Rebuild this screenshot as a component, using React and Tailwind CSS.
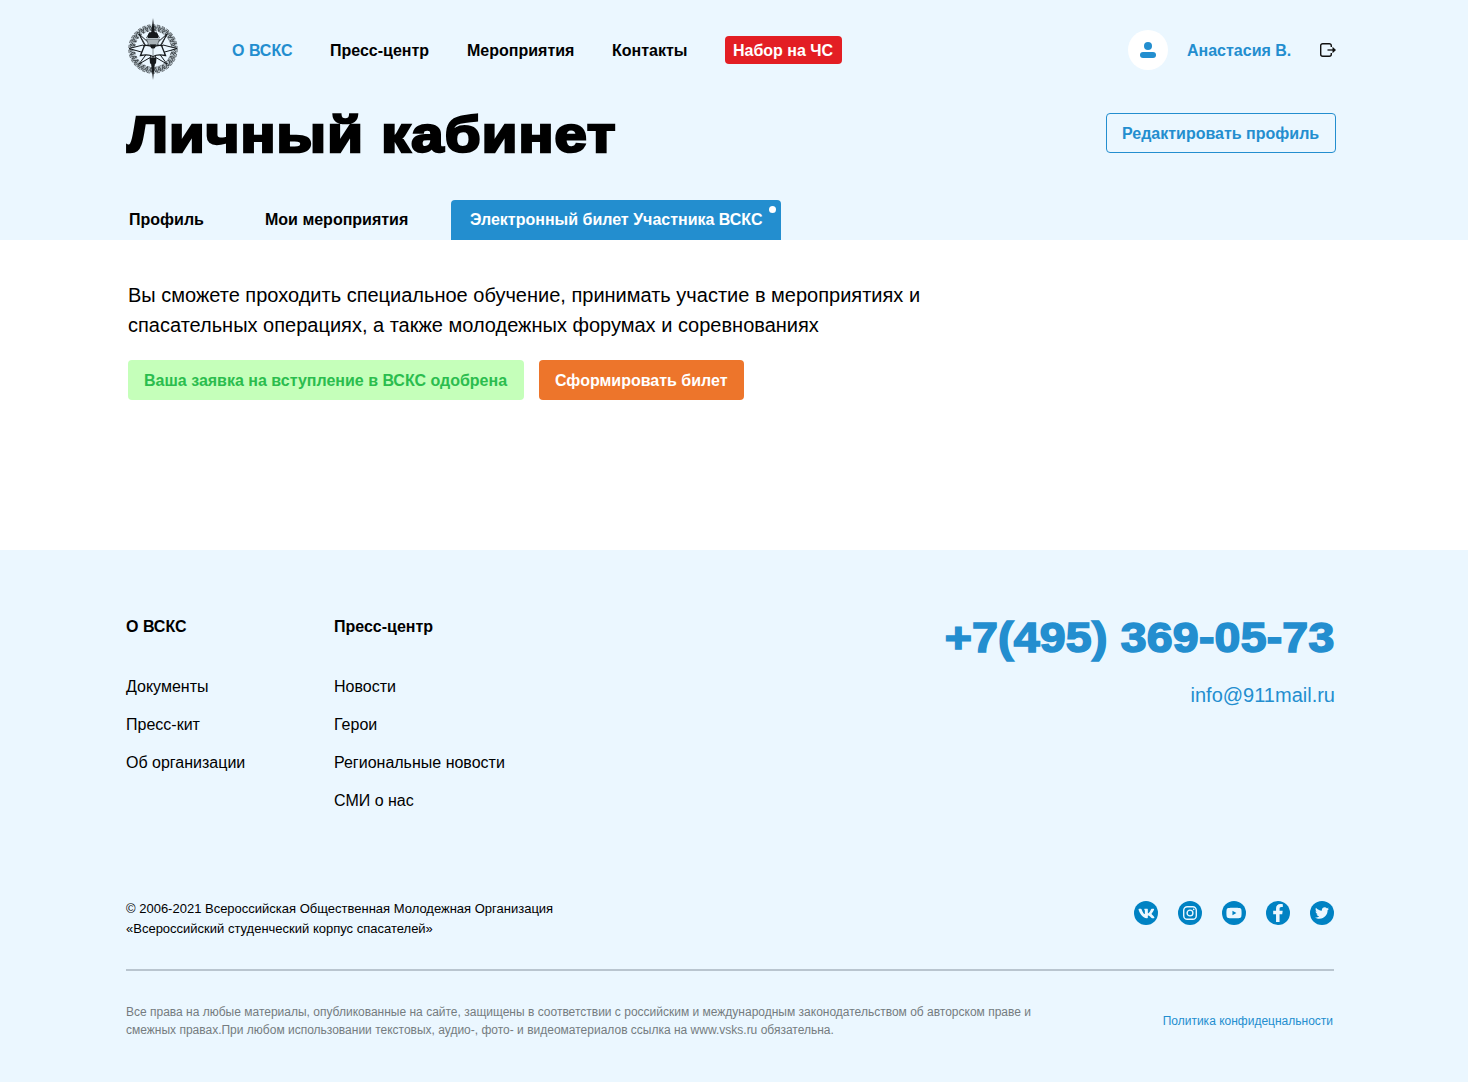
import { FaVk, FaYoutube, FaFacebookF, FaTwitter } from "react-icons/fa";

const leafAngles = Array.from({ length: 30 }, (_, i) => i * 12 + 6);

function Emblem() {
  return (
    <svg width="50" height="62" viewBox="0 0 50 62" fill="none" className="block shrink-0">
      <g stroke="#2b3135" strokeWidth="0.7">
        <circle cx="25" cy="31" r="21.300" stroke="#b4c0c7" strokeWidth="5" />
        <circle cx="25" cy="31" r="24.200" strokeDasharray="3.400 1.700" />
        <circle cx="25" cy="31" r="18.400" strokeDasharray="2.400 1.600" />
        {leafAngles.map((a) => (
          <path key={a} transform={`rotate(${a} 25 31)`} d="M25 12.600q-2.200-2.200-.6-5q2.200 2.400.6 5M25.500 10.500l2.400-2.600" />
        ))}
      </g>
      <g stroke="#15191c" strokeWidth="1" strokeLinejoin="miter">
        <path d="M11 16l10 9-3 5zM39 16l-10 9 3 5zM11 46l9-12 3 5zM39 46l-9-12-3 5z" fill="#ebf7ff" />
        <path d="M1 30.500l14-3.500 3 4-3 3.500zM49 30.500l-14-3.500-3 4 3 3.500z" fill="#ebf7ff" />
        <path d="M11 16l7 12M39 16l-7 12M22 14l-3.500 6M28 14l3.500 6" strokeWidth="0.8" />
      </g>
      <path d="M25 0l1.700 15h-3.400zM25 62l-1.700-15h3.400z" fill="#15191c" />
      <path d="M19.800 20q-.4-4.500 2.200-5.500l3-1.500 3 1.500q2.600 1 2.200 5.500z" fill="#15191c" />
      <path d="M18.500 21h13l-2 6h-9z" fill="#aab4b9" stroke="#4b5459" strokeWidth="0.7" />
      <path d="M16.500 27.500q5-.5 8.500 1.500q3.500-2 8.500-1.500l4 10q-8-1.500-12.500 1q-4.500-2.500-12.500-1z" fill="#ebf7ff" stroke="#15191c" strokeWidth="1.300" />
      <path d="M22 26.500h6l-1 3.500-2 1-2-1z" fill="#15191c" />
      <path d="M25 30v8" stroke="#8b959a" />
      <path d="M21.500 40q3.500-1.500 7 0l-.5 5-3 4-3-4z" fill="#15191c" />
    </svg>
  );
}

function LogoutIcon() {
  return (
    <svg width="16" height="14" viewBox="0 0 16 14" fill="none" className="block">
      <path d="M11.300 4V2.700a2 2 0 0 0-2-2H2.700a2 2 0 0 0-2 2v8.600a2 2 0 0 0 2 2h6.600a2 2 0 0 0 2-2V10" stroke="#111" strokeWidth="1.400" />
      <path d="M7.500 7h7" stroke="#111" strokeWidth="1.300" />
      <path d="M12.500 3.800L16 7l-3.500 3.200z" fill="#111" />
    </svg>
  );
}

function InstagramIcon({ size }) {
  return (
    <svg width={size} height={size} viewBox="0 0 14 14" fill="none" stroke="currentColor" strokeWidth="1.400">
      <rect x="0.700" y="0.700" width="12.600" height="12.600" rx="3.600" />
      <circle cx="7" cy="7" r="2.900" />
      <circle cx="10.700" cy="3.300" r="0.850" fill="currentColor" stroke="none" />
    </svg>
  );
}

const socials = [
  { Icon: FaVk, size: 17 },
  { Icon: InstagramIcon, size: 14 },
  { Icon: FaYoutube, size: 16 },
  { Icon: FaFacebookF, size: 18 },
  { Icon: FaTwitter, size: 14 },
];

export default function App() {
  return (
    <div className="h-[1082px] w-[1468px] overflow-hidden bg-white font-['Liberation_Sans',Arial,sans-serif] text-base text-black">
      <header className="flex h-[240px] flex-col bg-[#ebf7ff] pr-[132px] pl-[126px]">
        <div className="flex h-[100px] items-center">
          <div className="mb-0.5 ml-0.5"><Emblem /></div>
          <nav className="ml-[54px] flex items-center whitespace-nowrap font-bold">
            <a className="w-[98px] pt-0.5 text-[#238ecf]">О ВСКС</a>
            <a className="w-[137px] pt-0.5">Пресс-центр</a>
            <a className="w-[145px] pt-0.5">Мероприятия</a>
            <a className="w-[113px] pt-0.5">Контакты</a>
            <a className="h-7 w-[117px] rounded bg-[#e31e24] pt-[3px] pl-2 text-white">Набор на ЧС</a>
          </nav>
          <div className="ml-auto flex items-center">
            <div className="flex size-10 flex-col items-center justify-center rounded-full bg-white">
              <span className="size-2 rounded-full bg-[#238ecf]" />
              <span className="mt-[1.5px] h-[6.5px] w-4 rounded-[3px] bg-[#238ecf]" />
            </div>
            <span className="ml-[19px] w-[133px] pt-0.5 whitespace-nowrap font-bold text-[#238ecf]">Анастасия В.</span>
            <LogoutIcon />
          </div>
        </div>
        <div className="flex h-[100px] items-start justify-between">
          <h1 className="mt-[5px] origin-left scale-x-[1.147] pl-px text-[50.5px] leading-[60px] font-bold tracking-[1px] whitespace-nowrap [-webkit-text-stroke:2.5px_black]">Личный кабинет</h1>
          <button className="mt-[13px] h-10 w-[230px] rounded border border-[#238ecf] pt-0.5 pl-[15px] text-left font-bold whitespace-nowrap text-[#238ecf]">Редактировать профиль</button>
        </div>
        <div className="flex h-10 items-center whitespace-nowrap font-bold">
          <span className="ml-[3px] w-[136px]">Профиль</span>
          <span className="w-[186px]">Мои мероприятия</span>
          <span className="relative flex h-10 w-[330px] items-center rounded-t bg-[#238ecf] pl-[19px] text-white">
            Электронный билет Участника ВСКС
            <i className="absolute top-[5.5px] right-[5px] size-[7.5px] rounded-full bg-white" />
          </span>
        </div>
      </header>

      <main className="h-[310px] px-32 pt-10">
        <p className="whitespace-nowrap text-xl leading-[30px]">
          Вы сможете проходить специальное обучение, принимать участие в мероприятиях и<br />
          спасательных операциях, а также молодежных форумах и соревнованиях
        </p>
        <div className="mt-5 flex gap-[15px] font-bold whitespace-nowrap">
          <div className="flex h-10 w-[396px] items-center rounded bg-[#c5ffba] pt-0.5 pl-4 text-[#2bbd4e]">Ваша заявка на вступление в ВСКС одобрена</div>
          <button className="h-10 w-[205px] rounded bg-[#ed752b] pt-0.5 pl-4 text-left text-white">Сформировать билет</button>
        </div>
      </main>

      <footer className="h-[532px] bg-[#ebf7ff] pt-[62px] pr-[134px] pl-[126px]">
        <div className="flex h-[289px] whitespace-nowrap">
          <div className="w-[208px]">
            <h2 className="mb-[26px] h-[30px] leading-[30px] font-bold">О ВСКС</h2>
            <ul className="leading-[38px]"><li>Документы</li><li>Пресс-кит</li><li>Об организации</li></ul>
          </div>
          <div>
            <h2 className="mb-[26px] h-[30px] leading-[30px] font-bold">Пресс-центр</h2>
            <ul className="leading-[38px]"><li>Новости</li><li>Герои</li><li>Региональные новости</li><li>СМИ о нас</li></ul>
          </div>
          <div className="ml-auto text-right text-[#238ecf]">
            <div className="origin-right scale-x-[1.106] text-[42px] leading-[52px] font-bold tracking-[0.2px] [-webkit-text-stroke:1.6px_#238ecf]">+7(495) 369-05-73</div>
            <div className="mt-4 -mr-px text-xl leading-[30px]">info@911mail.ru</div>
          </div>
        </div>
        <div className="flex h-[68px] justify-between">
          <p className="mt-[-2px] text-[13px] leading-5 whitespace-nowrap">
            © 2006-2021 Всероссийская Общественная Молодежная Организация<br />«Всероссийский студенческий корпус спасателей»
          </p>
          <div className="flex gap-5">
            {socials.map(({ Icon, size }, i) => (
              <a key={i} className="flex size-6 items-center justify-center rounded-full bg-[#0082c3] text-[#ebf7ff]"><Icon size={size} /></a>
            ))}
          </div>
        </div>
        <div className="h-0.5 bg-[#b9c5cf]" />
        <div className="flex justify-between pt-8 text-xs leading-[18px] whitespace-nowrap">
          <p className="text-[#757c80]">
            Все права на любые материалы, опубликованные на сайте, защищены в соответствии с российским и международным законодательством об авторском праве и<br />
            смежных правах.При любом использовании текстовых, аудио-, фото- и видеоматериалов ссылка на www.vsks.ru обязательна.
          </p>
          <a className="mr-px pt-[9px] text-[#238ecf]">Политика конфидецнальности</a>
        </div>
      </footer>
    </div>
  );
}
